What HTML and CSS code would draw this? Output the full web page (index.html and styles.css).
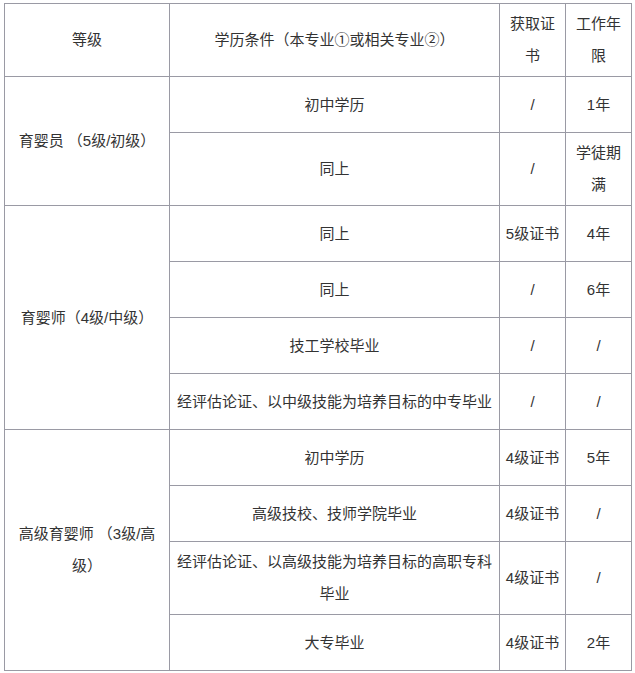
FILE: index.html
```html
<!DOCTYPE html>
<html lang="zh-CN">
<head>
<meta charset="utf-8">
<link rel="stylesheet" href="styles.css">
</head>
<body>
<table class="grid">
  <colgroup>
    <col class="c1"><col class="c2"><col class="c3"><col class="c4">
  </colgroup>
  <tr class="tall">
    <td>等级</td>
    <td>学历条件（本专业①或相关专业②）</td>
    <td>获取证<br>书</td>
    <td>工作年<br>限</td>
  </tr>
  <tr class="short">
    <td rowspan="2">育婴员 （5级/初级）</td>
    <td>初中学历</td>
    <td>/</td>
    <td>1年</td>
  </tr>
  <tr class="tall">
    <td>同上</td>
    <td>/</td>
    <td>学徒期<br>满</td>
  </tr>
  <tr class="short">
    <td rowspan="4">育婴师（4级/中级）</td>
    <td>同上</td>
    <td>5级证书</td>
    <td>4年</td>
  </tr>
  <tr class="short">
    <td>同上</td>
    <td>/</td>
    <td>6年</td>
  </tr>
  <tr class="short">
    <td>技工学校毕业</td>
    <td>/</td>
    <td>/</td>
  </tr>
  <tr class="short">
    <td>经评估论证、以中级技能为培养目标的中专毕业</td>
    <td>/</td>
    <td>/</td>
  </tr>
  <tr class="short">
    <td rowspan="4">高级育婴师 （3级/高<br>级）</td>
    <td>初中学历</td>
    <td>4级证书</td>
    <td>5年</td>
  </tr>
  <tr class="short">
    <td>高级技校、技师学院毕业</td>
    <td>4级证书</td>
    <td>/</td>
  </tr>
  <tr class="tall">
    <td>经评估论证、以高级技能为培养目标的高职专科<br>毕业</td>
    <td>4级证书</td>
    <td>/</td>
  </tr>
  <tr class="short">
    <td>大专毕业</td>
    <td>4级证书</td>
    <td>2年</td>
  </tr>
</table>
</body>
</html>
```

FILE: styles.css
```css
html, body {
  margin: 0;
  padding: 0;
  background: #ffffff;
}

.grid {
  margin: 3px 0 0 4px;
  border-collapse: collapse;
  table-layout: fixed;
  width: 627px;
  font-family: "Liberation Sans", "Noto Sans CJK SC", sans-serif;
  font-size: 15px;
  color: #333333;
}

.c1 { width: 165px; }
.c2 { width: 330px; }
.c3 { width: 66px; }
.c4 { width: 66px; }

.grid td {
  border: 1px solid #9a9aa4;
  padding: 0 4px;
  text-align: center;
  vertical-align: middle;
  line-height: 32px;
  white-space: nowrap;
}

.short { height: 56px; }
.tall { height: 73px; }
```
